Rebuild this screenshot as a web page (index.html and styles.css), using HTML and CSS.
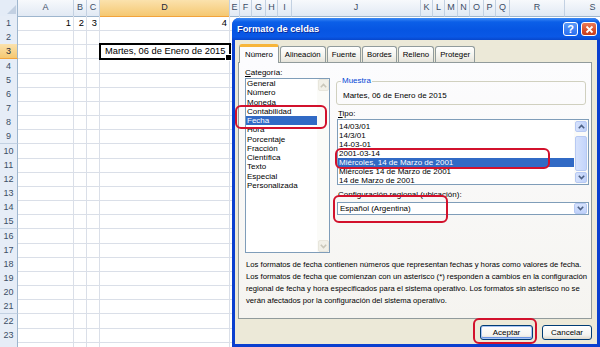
FILE: index.html
```html
<!DOCTYPE html>
<html lang="es">
<head>
    <meta charset="UTF-8">
    <title>Formato de celdas</title>
    <link rel="stylesheet" href="styles.css">
</head>
<body>
    <div class="sheet">
        <div class="col-heads">
            <div class="corner"><svg width="18" height="16" viewBox="0 0 18 16"><path d="M16 5 L16 14 L7 14 Z" fill="#c2d0e2"/></svg></div>
            <div class="ch">A</div>
            <div class="ch">B</div>
            <div class="ch">C</div>
            <div class="ch on">D</div>
            <div class="ch">E</div>
            <div class="ch">F</div>
            <div class="ch">G</div>
            <div class="ch">H</div>
            <div class="ch">I</div>
            <div class="ch">J</div>
            <div class="ch">K</div>
            <div class="ch">L</div>
            <div class="ch">M</div>
            <div class="ch">N</div>
            <div class="ch">O</div>
            <div class="ch">P</div>
            <div class="ch">Q</div>
            <div class="ch">R</div>
            <div class="ch">S</div>
        </div>
        <div class="row"><div class="rh">1</div><div class="cell num">1</div><div class="cell num">2</div><div class="cell num">3</div><div class="cell num">4</div><div class="cell"></div></div>
        <div class="row"><div class="rh">2</div><div class="cell"></div><div class="cell"></div><div class="cell"></div><div class="cell"></div><div class="cell"></div></div>
        <div class="row"><div class="rh on">3</div><div class="cell"></div><div class="cell"></div><div class="cell"></div><div class="cell sel">Martes, 06 de Enero de 2015</div><div class="cell"></div></div>
        <div class="row"><div class="rh">4</div><div class="cell"></div><div class="cell"></div><div class="cell"></div><div class="cell"></div><div class="cell"></div></div>
        <div class="row"><div class="rh">5</div><div class="cell"></div><div class="cell"></div><div class="cell"></div><div class="cell"></div><div class="cell"></div></div>
        <div class="row"><div class="rh">6</div><div class="cell"></div><div class="cell"></div><div class="cell"></div><div class="cell"></div><div class="cell"></div></div>
        <div class="row"><div class="rh">7</div><div class="cell"></div><div class="cell"></div><div class="cell"></div><div class="cell"></div><div class="cell"></div></div>
        <div class="row"><div class="rh">8</div><div class="cell"></div><div class="cell"></div><div class="cell"></div><div class="cell"></div><div class="cell"></div></div>
        <div class="row"><div class="rh">9</div><div class="cell"></div><div class="cell"></div><div class="cell"></div><div class="cell"></div><div class="cell"></div></div>
        <div class="row"><div class="rh">10</div><div class="cell"></div><div class="cell"></div><div class="cell"></div><div class="cell"></div><div class="cell"></div></div>
        <div class="row"><div class="rh">11</div><div class="cell"></div><div class="cell"></div><div class="cell"></div><div class="cell"></div><div class="cell"></div></div>
        <div class="row"><div class="rh">12</div><div class="cell"></div><div class="cell"></div><div class="cell"></div><div class="cell"></div><div class="cell"></div></div>
        <div class="row"><div class="rh">13</div><div class="cell"></div><div class="cell"></div><div class="cell"></div><div class="cell"></div><div class="cell"></div></div>
        <div class="row"><div class="rh">14</div><div class="cell"></div><div class="cell"></div><div class="cell"></div><div class="cell"></div><div class="cell"></div></div>
        <div class="row"><div class="rh">15</div><div class="cell"></div><div class="cell"></div><div class="cell"></div><div class="cell"></div><div class="cell"></div></div>
        <div class="row"><div class="rh">16</div><div class="cell"></div><div class="cell"></div><div class="cell"></div><div class="cell"></div><div class="cell"></div></div>
        <div class="row"><div class="rh">17</div><div class="cell"></div><div class="cell"></div><div class="cell"></div><div class="cell"></div><div class="cell"></div></div>
        <div class="row"><div class="rh">18</div><div class="cell"></div><div class="cell"></div><div class="cell"></div><div class="cell"></div><div class="cell"></div></div>
        <div class="row"><div class="rh">19</div><div class="cell"></div><div class="cell"></div><div class="cell"></div><div class="cell"></div><div class="cell"></div></div>
        <div class="row"><div class="rh">20</div><div class="cell"></div><div class="cell"></div><div class="cell"></div><div class="cell"></div><div class="cell"></div></div>
        <div class="row"><div class="rh">21</div><div class="cell"></div><div class="cell"></div><div class="cell"></div><div class="cell"></div><div class="cell"></div></div>
        <div class="row"><div class="rh">22</div><div class="cell"></div><div class="cell"></div><div class="cell"></div><div class="cell"></div><div class="cell"></div></div>
        <div class="row"><div class="rh">23</div><div class="cell"></div><div class="cell"></div><div class="cell"></div><div class="cell"></div><div class="cell"></div></div>
        <div class="row"><div class="rh"></div><div class="cell"></div><div class="cell"></div><div class="cell"></div><div class="cell"></div><div class="cell"></div></div>
    </div>

    <div class="dialog">
        <div class="titlebar">
            <span class="title">Formato de celdas</span>
            <span class="tb-btn help">?</span>
            <span class="tb-btn close">
                <svg width="9" height="9" viewBox="0 0 9 9"><path d="M1.5 1.5 L7.5 7.5 M7.5 1.5 L1.5 7.5" stroke="#fff" stroke-width="1.8"/></svg>
            </span>
        </div>
        <div class="dlg-body">
            <div class="tabs">
                <div class="tab active">Número</div>
                <div class="tab">Alineación</div>
                <div class="tab">Fuente</div>
                <div class="tab">Bordes</div>
                <div class="tab">Relleno</div>
                <div class="tab">Proteger</div>
            </div>
            <div class="panel">
                <div class="panel-top">
                    <div class="cat-col">
                        <div class="lbl"><u>C</u>ategoría:</div>
                        <div class="listbox cat-list">
                            <ul class="items">
                                <li>General</li>
                                <li>Número</li>
                                <li>Moneda</li>
                                <li>Contabilidad</li>
                                <li class="selected">Fecha</li>
                                <li>Hora</li>
                                <li>Porcentaje</li>
                                <li>Fracción</li>
                                <li>Científica</li>
                                <li>Texto</li>
                                <li>Especial</li>
                                <li>Personalizada</li>
                            </ul>
                            <div class="vscroll off">
                                <span class="sb-btn"><svg width="7" height="5" viewBox="0 0 7 5"><path d="M0.8 4.2 L3.5 1.4 L6.2 4.2" fill="none" stroke="#c9c7ba" stroke-width="1.6"/></svg></span>
                                <span class="sb-track"></span>
                                <span class="sb-btn"><svg width="7" height="5" viewBox="0 0 7 5"><path d="M0.8 0.8 L3.5 3.6 L6.2 0.8" fill="none" stroke="#c9c7ba" stroke-width="1.6"/></svg></span>
                            </div>
                        </div>
                    </div>
                    <div class="right-col">
                        <fieldset class="sample">
                            <legend>Muestra</legend>
                            <div class="sample-text">Martes, 06 de Enero de 2015</div>
                        </fieldset>
                        <div class="lbl tipo-lbl"><u>T</u>ipo:</div>
                        <div class="listbox type-list">
                            <ul class="items">
                                <li>14/03/01</li>
                                <li>14/3/01</li>
                                <li>14-03-01</li>
                                <li>2001-03-14</li>
                                <li class="selected">Miércoles, 14 de Marzo de 2001</li>
                                <li>Miércoles 14 de Marzo de 2001</li>
                                <li>14 de Marzo de 2001</li>
                            </ul>
                            <div class="vscroll">
                                <span class="sb-btn"><svg width="7" height="5" viewBox="0 0 7 5"><path d="M0.8 4.2 L3.5 1.4 L6.2 4.2" fill="none" stroke="#4d6185" stroke-width="1.6"/></svg></span>
                                <span class="sb-track"><span class="sb-thumb"></span></span>
                                <span class="sb-btn"><svg width="7" height="5" viewBox="0 0 7 5"><path d="M0.8 0.8 L3.5 3.6 L6.2 0.8" fill="none" stroke="#4d6185" stroke-width="1.6"/></svg></span>
                            </div>
                        </div>
                        <div class="lbl cfg-lbl">Configuración regional (ubicación):</div>
                        <div class="combo">
                            <span class="combo-text">Español (Argentina)</span>
                            <span class="combo-btn"><svg width="7" height="5" viewBox="0 0 7 5"><path d="M0.8 0.8 L3.5 3.6 L6.2 0.8" fill="none" stroke="#4d6185" stroke-width="1.6"/></svg></span>
                        </div>
                    </div>
                </div>
                <p class="desc">Los formatos de fecha contienen números que representan fechas y horas como valores de fecha.<br>Los formatos de fecha que comienzan con un asterisco (*) responden a cambios en la configuración<br>regional de fecha y hora especificados para el sistema operativo. Los formatos sin asterisco no se<br>verán afectados por la configuración del sistema operativo.</p>
            </div>
            <div class="buttons">
                <button class="btn default">Aceptar</button>
                <button class="btn">Cancelar</button>
            </div>
        </div>
    </div>

    <!-- red annotation outlines -->
    <div class="mark mark-cat"></div>
    <div class="mark mark-type"></div>
    <div class="mark mark-cfg"></div>
    <div class="mark mark-ok"></div>
</body>
</html>
```

FILE: styles.css
```css
* {
    box-sizing: border-box;
}

body {
    margin: 0;
    width: 600px;
    height: 347px;
    overflow: hidden;
    position: relative;
    background: #fff;
    font-family: "Liberation Sans", Arial, sans-serif;
    color: #000;
}

/* spreadsheet */
.sheet {
    font-size: 9.3px;
}

.col-heads,
.row {
    display: grid;
    grid-template-columns: 18px 56px 13px 13px 130px 10px 12px 14px 12px 14px 129px 12px 12px 13px 12px 14px 12px 14px 55px 56px;
}

.col-heads {
    height: 16px;
}

.corner {
    background: #e4ecf7;
    border-right: 1px solid #9eb6ce;
    border-bottom: 1px solid #9eb6ce;
}

.corner svg {
    display: block;
}

.ch {
    background: linear-gradient(#f7f9fc, #e1e9f4);
    border-right: 1px solid #c3d1e2;
    border-bottom: 1px solid #9eb6ce;
    text-align: center;
    line-height: 15px;
    font-size: 9px;
    color: #3b4d66;
}

.ch.on,
.rh.on {
    background: linear-gradient(#fbe2ad, #f5c872);
    border-bottom-color: #f2a33c;
    color: #1e2a3a;
}

.row {
    height: 14.18px;
}

.rh {
    background: #e6edf7;
    border-right: 1px solid #9eb6ce;
    border-bottom: 1px solid #c3d1e2;
    text-align: center;
    line-height: 14px;
    font-size: 9px;
    color: #3b4d66;
}

.cell {
    border-right: 1px solid #dadfe8;
    border-bottom: 1px solid #dadfe8;
    padding: 0 2px;
    line-height: 14px;
    white-space: nowrap;
}

.cell.num {
    text-align: right;
}

.cell.sel {
    position: relative;
    z-index: 1;
    outline: 2px solid #000;
    outline-offset: -1px;
    padding-left: 5px;
}

.cell.sel::after {
    content: "";
    position: absolute;
    right: -3px;
    bottom: -3px;
    width: 5px;
    height: 5px;
    background: #000;
    border: 1px solid #fff;
}

/* dialog window */
.dialog {
    position: absolute;
    left: 232px;
    top: 18px;
    width: 368px;
    height: 329px;
    display: flex;
    flex-direction: column;
    padding: 0 3px 3px;
    background: #0a3fcf;
    border-radius: 7px 7px 0 0;
    font-size: 8px;
}

.titlebar {
    height: 22px;
    margin: 0 -3px;
    padding: 0 3px 0 5px;
    display: flex;
    align-items: center;
    gap: 3px;
    border-radius: 7px 7px 0 0;
    background: linear-gradient(#3d8af5 0%, #0b5fe8 18%, #0655e2 55%, #0a58e6 85%, #0747cc 100%);
}

.title {
    flex: 1;
    color: #fff;
    font-weight: bold;
    font-size: 9.3px;
    text-shadow: 1px 1px 0 #0b2b9a;
}

.tb-btn {
    width: 15px;
    height: 14px;
    border: 1px solid #fff;
    border-radius: 3px;
    display: flex;
    align-items: center;
    justify-content: center;
    color: #fff;
    font-weight: bold;
    font-size: 11px;
}

.help {
    background: linear-gradient(#5a9af8, #2a6ef0);
}

.close {
    width: 16px;
    background: linear-gradient(#ea7a58, #d9502c 60%, #c43d1c);
}

.dlg-body {
    flex: 1;
    background: #ece9d8;
    padding: 4px 5px 0 3px;
    display: flex;
    flex-direction: column;
}

.tabs {
    height: 18px;
    display: flex;
    align-items: flex-end;
    gap: 1px;
    padding-left: 1px;
    position: relative;
    z-index: 1;
}

.tab {
    height: 16px;
    padding: 0 4px;
    line-height: 15px;
    font-size: 7.8px;
    border: 1px solid #919b9c;
    border-bottom: none;
    border-radius: 3px 3px 0 0;
    background: linear-gradient(#fff, #f3f2ec 60%, #e6e4db);
}

.tab.active {
    height: 19px;
    margin-bottom: -1px;
    padding: 0 5px;
    border-top: 3px solid #f7b53a;
    background: #fcfcfe;
    line-height: 15px;
}

.panel {
    height: 257px;
    border: 1px solid #919b9c;
    background: linear-gradient(#fcfcfe, #f5f4f0);
    padding: 4px 0 0 6px;
}

.panel-top {
    display: flex;
    gap: 6px;
    height: 186px;
}

.lbl {
    line-height: 11px;
    height: 11px;
    white-space: nowrap;
}

.cat-col {
    width: 85px;
}

.listbox {
    border: 1px solid #7f9db9;
    background: #fff;
    display: flex;
}

.items {
    list-style: none;
    margin: 0;
    padding: 0;
    flex: 1;
    white-space: nowrap;
    overflow: hidden;
}

.items li {
    padding-left: 1px;
}

.items li.selected {
    background: #316ac5;
    color: #fff;
}

.cat-list {
    height: 175px;
}

.cat-list .items li {
    line-height: 9.25px;
}

.vscroll {
    width: 12px;
    display: flex;
    flex-direction: column;
    background: #fbfbf8;
}

.sb-btn {
    height: 12px;
    margin: 0 0 0 1px;
    display: flex;
    align-items: center;
    justify-content: center;
    border: 1px solid #b7c9f3;
    border-radius: 2px;
    background: linear-gradient(90deg, #d6e2fc, #bfd1fa);
}

.vscroll.off .sb-btn {
    border-color: #e8e6dc;
    background: #f1f0e8;
}

.sb-track {
    flex: 1;
    display: flex;
    flex-direction: column;
    padding: 4px 0 1px 1px;
}

.sb-thumb {
    height: 35px;
    border: 1px solid #b7c9f3;
    border-radius: 2px;
    background: linear-gradient(90deg, #d6e2fc, #c3d4fb);
}

.right-col {
    width: 253px;
    padding-top: 9px;
}

.sample {
    margin: 0 3px 0 0;
    padding: 0 0 0 4px;
    height: 29px;
    border: 1px solid #d0d0bf;
    border-radius: 3px;
}

.sample legend {
    color: #0046d5;
    padding: 0 1px;
    line-height: 10px;
}

.sample-text {
    margin-top: 5px;
    padding-left: 2px;
    line-height: 10px;
}

.tipo-lbl {
    margin-top: 3px;
    padding-left: 2px;
}

.type-list {
    height: 66px;
    margin-left: 1px;
}

.type-list .items {
    padding-top: 2px;
}

.type-list .items li {
    line-height: 9px;
}

.type-list .vscroll {
    width: 14px;
    padding: 1px 1px 1px 0;
}

.cfg-lbl {
    margin-top: 4px;
    padding-left: 2px;
}

.combo {
    margin: 2px 0 0 1px;
    height: 13px;
    border: 1px solid #7f9db9;
    background: #fff;
    display: flex;
    align-items: center;
    padding: 0 1px 0 2px;
}

.combo-text {
    flex: 1;
}

.combo-btn {
    width: 13px;
    height: 11px;
    display: flex;
    align-items: center;
    justify-content: center;
    border: 1px solid #b7c9f3;
    border-radius: 2px;
    background: linear-gradient(#d6e2fc, #bfd1fa);
}

.desc {
    margin: 6px 0 0 1px;
    font-size: 7.7px;
    line-height: 12px;
    white-space: nowrap;
}

.buttons {
    display: flex;
    justify-content: flex-end;
    gap: 9px;
    padding-top: 6px;
}

.btn {
    height: 15px;
    width: 50px;
    padding: 0;
    font-family: inherit;
    font-size: 8px;
    color: #000;
    border: 1px solid #003c74;
    border-radius: 3px;
    background: linear-gradient(#ffffff, #f4f4f0 70%, #dcd8cc);
}

.btn.default {
    width: 53px;
    box-shadow: inset 0 0 0 1px #a8c4f3, inset 0 -1px 0 1px #6d95e4;
}

/* red annotation outlines */
.mark {
    position: absolute;
    border: 2px solid #d2112c;
    border-radius: 6px;
    z-index: 5;
}

.mark-cat {
    left: 235px;
    top: 105px;
    width: 92px;
    height: 24px;
}

.mark-type {
    left: 335px;
    top: 148px;
    width: 215px;
    height: 21px;
}

.mark-cfg {
    left: 333px;
    top: 195px;
    width: 115px;
    height: 28px;
}

.mark-ok {
    left: 473px;
    top: 318px;
    width: 64px;
    height: 26px;
}
```
